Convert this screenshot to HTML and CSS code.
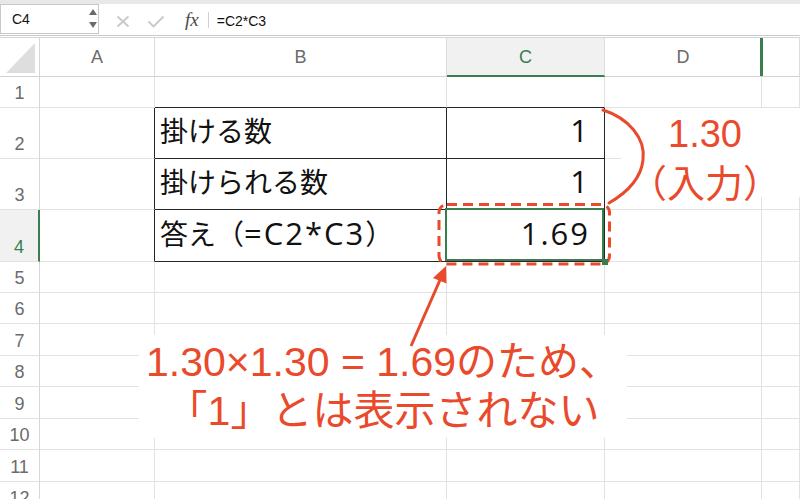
FILE: index.html
```html
<!DOCTYPE html>
<html lang="ja">
<head>
<meta charset="utf-8">
<title>Excel</title>
<link rel="stylesheet" href="styles.css">
</head>
<body>
<div class="app">
  <div class="topstrip"></div>
  <div class="fbar">
    <div class="namebox">
      <span class="nb-text">C4</span>
      <svg class="stepper" width="8" height="20" viewBox="0 0 8 20"><polygon points="0,6 4,0 8,6" fill="#6a6a6a"/><polygon points="0,13 8,13 4,19" fill="#6a6a6a"/></svg>
    </div>
    <svg class="ico-x" width="14" height="13" viewBox="0 0 14 13"><path d="M1.5 1.5 L12.5 11.5 M12.5 1.5 L1.5 11.5" stroke="#c8c8c8" stroke-width="1.8" fill="none"/></svg>
    <svg class="ico-check" width="18" height="13" viewBox="0 0 18 13"><path d="M1.5 6.5 L6.5 11.5 L16.5 1.5" stroke="#c8c8c8" stroke-width="1.8" fill="none"/></svg>
    <span class="fx">fx</span>
    <span class="fsep"></span>
    <span class="ftext">=C2*C3</span>
  </div>
  <div class="sheet">
    <div class="grid">
      <div class="corner"><svg width="40" height="38" viewBox="0 0 40 38"><polygon points="35,5 35,35 6,35" fill="#dedede"/></svg></div>
      <div class="ch">A</div>
      <div class="ch">B</div>
      <div class="ch sel">C</div>
      <div class="ch freeze">D</div>
      <div class="ch"></div>

      <div class="rh">1</div>
      <div class="c"></div>
      <div class="c tb-b"></div>
      <div class="c tb-b"></div>
      <div class="c"></div>
      <div class="c"></div>

      <div class="rh">2</div>
      <div class="c tb-r"></div>
      <div class="c tb-r tb-b txt">掛ける数</div>
      <div class="c tb-r tb-b txt num"><span class="lat">1</span></div>
      <div class="c"></div>
      <div class="c"></div>

      <div class="rh">3</div>
      <div class="c tb-r"></div>
      <div class="c tb-r tb-b txt">掛けられる数</div>
      <div class="c tb-r tb-b txt num"><span class="lat">1</span></div>
      <div class="c"></div>
      <div class="c"></div>

      <div class="rh sel">4</div>
      <div class="c tb-r"></div>
      <div class="c tb-r tb-b txt">答え（<span class="lat">=C2*C3</span>）</div>
      <div class="c tb-r tb-b txt num selcell"><span class="lat">1.69</span></div>
      <div class="c"></div>
      <div class="c"></div>

      <div class="rh">5</div><div class="c"></div><div class="c"></div><div class="c"></div><div class="c"></div><div class="c"></div>
      <div class="rh">6</div><div class="c"></div><div class="c"></div><div class="c"></div><div class="c"></div><div class="c"></div>
      <div class="rh">7</div><div class="c"></div><div class="c"></div><div class="c"></div><div class="c"></div><div class="c"></div>
      <div class="rh">8</div><div class="c"></div><div class="c"></div><div class="c"></div><div class="c"></div><div class="c"></div>
      <div class="rh">9</div><div class="c"></div><div class="c"></div><div class="c"></div><div class="c"></div><div class="c"></div>
      <div class="rh">10</div><div class="c"></div><div class="c"></div><div class="c"></div><div class="c"></div><div class="c"></div>
      <div class="rh">11</div><div class="c"></div><div class="c"></div><div class="c"></div><div class="c"></div><div class="c"></div>
      <div class="rh">12</div><div class="c"></div><div class="c"></div><div class="c"></div><div class="c"></div><div class="c"></div>
    </div>
  </div>

  <div class="note-side">
    <div class="ns-line">1.30</div>
    <div class="ns-line">（入力）</div>
  </div>
  <div class="note-main">
    <div>1.30×1.30 = 1.69のため、</div>
    <div>「1」とは表示されない</div>
  </div>

  <svg class="overlay" width="800" height="499" viewBox="0 0 800 499">
    <path d="M603 110 C628 118 646 138 643 160 C641 178 628 192 609 203" fill="none" stroke="#ea4a2c" stroke-width="3" stroke-linecap="round"/>
    <rect x="439" y="204.5" width="170.5" height="59.5" rx="8" fill="none" stroke="#ea4a2c" stroke-width="3" stroke-dasharray="10 6"/>
    <line x1="411" y1="346" x2="440" y2="280" stroke="#ea4a2c" stroke-width="3"/>
    <polygon points="446,266 446.5,283.5 433,278" fill="#ea4a2c"/>
  </svg>
</div>
</body>
</html>
```

FILE: styles.css
```css
html, body {
  margin: 0;
  padding: 0;
  background: #ffffff;
}
body {
  width: 800px;
  height: 499px;
  overflow: hidden;
  font-family: "Liberation Sans", "Noto Sans CJK JP", sans-serif;
}
.app {
  position: relative;
  width: 800px;
  height: 499px;
  overflow: hidden;
  background: #ffffff;
}
.topstrip {
  height: 4px;
  background: #e8e8e8;
}
.fbar {
  height: 32px;
  box-sizing: border-box;
  border-bottom: 1px solid #c9c9c9;
  display: flex;
  align-items: flex-start;
  background: #ffffff;
}
.namebox {
  width: 99px;
  height: 30px;
  box-sizing: border-box;
  border: 1px solid #c8c8c8;
  display: flex;
  align-items: center;
  justify-content: space-between;
  padding: 0 1px 0 11px;
}
.nb-text {
  font-size: 14px;
  color: #111;
}
.stepper {
  display: block;
}
.ico-x {
  display: block;
  margin: 11px 0 0 17px;
}
.ico-check {
  display: block;
  margin: 11px 0 0 17px;
}
.fx {
  font-family: "Liberation Serif", serif;
  font-style: italic;
  font-size: 19px;
  color: #4a4a4a;
  margin: 5px 0 0 20px;
  line-height: 22px;
}
.fsep {
  width: 1px;
  height: 16px;
  background: #d2d2d2;
  margin: 8px 0 0 9px;
}
.ftext {
  font-size: 14px;
  color: #111;
  margin: 9px 0 0 8px;
  line-height: 16px;
}
.sheet {
  margin-top: 1px;
  border-top: 1px solid #d6d6d6;
}
.grid {
  display: grid;
  grid-template-columns: 40px 115px 292px 158px 157px 38px;
  grid-template-rows: 39px 31px 51px 51px 52px 31px 31px 32px 31px 32px 31px 32px 31px;
}
.grid > div {
  box-sizing: border-box;
  min-width: 0;
  min-height: 0;
}
.corner {
  border-right: 1px solid #d6d6d6;
  border-bottom: 1px solid #d2d2d2;
}
.corner svg {
  display: block;
}
.ch {
  border-right: 1px solid #dcdcdc;
  border-bottom: 1px solid #d2d2d2;
  display: flex;
  align-items: center;
  justify-content: center;
  font-size: 18px;
  line-height: 18px;
  color: #6b6b6b;
  position: relative;
}
.ch.sel {
  background: #f1f1f1;
  border-bottom: 2px solid #3a7d4f;
  color: #3a7d4f;
}
.ch.freeze::after {
  content: "";
  position: absolute;
  top: 0;
  bottom: 0;
  right: -2px;
  width: 3px;
  background: #3a7d4f;
}
.rh {
  border-right: 1px solid #d6d6d6;
  border-bottom: 1px solid #e2e2e2;
  display: flex;
  align-items: flex-end;
  justify-content: center;
  font-size: 18px;
  line-height: 18px;
  color: #6b6b6b;
  padding-bottom: 5px;
}
.rh.sel {
  background: #f1f1f1;
  border-right: 2px solid #3a7d4f;
  color: #3a7d4f;
}
.c {
  border-right: 1px solid #e2e2e2;
  border-bottom: 1px solid #e2e2e2;
}
.c.tb-r {
  border-right-color: #262626;
}
.c.tb-b {
  border-bottom-color: #262626;
}
.txt {
  display: flex;
  align-items: flex-end;
  padding: 0 0 13px 5px;
  font-family: "Noto Sans CJK JP", sans-serif;
  font-size: 28px;
  line-height: 30px;
  color: #111;
  white-space: nowrap;
}
.txt.num {
  justify-content: flex-end;
  padding-right: 14px;
  padding-left: 0;
}
.lat {
  font-family: "Open Sans", "Liberation Sans", sans-serif;
  font-size: 31px;
  letter-spacing: 2px;
}
.selcell {
  position: relative;
}
.selcell::after {
  content: "";
  position: absolute;
  top: -2px;
  left: -2px;
  right: 0;
  bottom: 0;
  border: 2px solid #3a7d4f;
}
.selcell::before {
  content: "";
  position: absolute;
  right: -4px;
  bottom: -4px;
  width: 6px;
  height: 6px;
  background: #3a7d4f;
  z-index: 2;
}
.note-side {
  position: absolute;
  left: 621px;
  top: 108px;
  width: 179px;
  height: 89px;
  box-sizing: border-box;
  padding: 1px 11px 0 0;
  background: #ffffff;
  color: #ea4a2c;
  font-family: "Liberation Sans", "Noto Sans CJK JP", sans-serif;
  font-size: 38px;
  line-height: 50px;
  text-align: center;
  white-space: nowrap;
}
.note-main {
  position: absolute;
  left: 139px;
  top: 335px;
  width: 488px;
  height: 103px;
  box-sizing: border-box;
  padding-top: 3px;
  background: #ffffff;
  color: #ea4a2c;
  font-family: "Liberation Sans", "Noto Sans CJK JP", sans-serif;
  font-size: 41px;
  line-height: 49px;
  text-align: center;
  white-space: nowrap;
}
.overlay {
  position: absolute;
  left: 0;
  top: 0;
  pointer-events: none;
}
```
